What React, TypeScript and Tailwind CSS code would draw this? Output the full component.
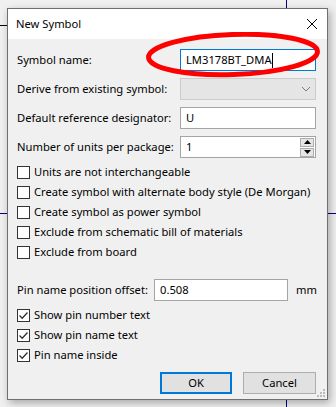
import React from 'react';

const font = { fontFamily: '"Noto Sans", "Open Sans", sans-serif' };

function Check({ checked, label }: { checked?: boolean; label: string }) {
  return (
    <div className="flex items-center h-[20px] whitespace-nowrap">
      <div className="w-[13px] h-[13px] border border-[#333333] bg-white flex items-center justify-center shrink-0">
        {checked && (
          <svg width="11" height="11" viewBox="0 0 11 11">
            <path d="M1.5 5.5 L4.2 8.2 L9.5 2.5" fill="none" stroke="#333333" strokeWidth="1.3" />
          </svg>
        )}
      </div>
      <span className="ml-[4px]">{label}</span>
    </div>
  );
}

function Field({ label, children }: { label: string; children: React.ReactNode }) {
  return (
    <div className="flex items-center h-[22px] whitespace-nowrap">
      <span className="flex-1">{label}</span>
      {children}
    </div>
  );
}

export default function App() {
  return (
    <div className="relative w-[336px] h-[407px] bg-[#f0f0f0] overflow-hidden text-[11.2px] text-black" style={font}>
      {/* drawing canvas lines behind the dialog */}
      <div className="absolute left-0 top-[25px] w-[20px] h-px bg-black" />
      <div className="absolute left-[286px] top-0 w-px h-[407px] bg-[#000080]" />
      <div className="absolute left-0 top-[213px] w-[336px] h-px bg-[#000080]" />

      <div className="relative ml-[7px] mt-[8px] w-[321px] h-[392px] border border-[#6f6f6f] bg-[#f0f0f0] shadow-[2px_3px_8px_rgba(0,0,0,0.3)] flex flex-col">
        <div className="h-[30px] bg-white flex items-center justify-between pl-[8px] pr-[9px]">
          <span>New Symbol</span>
          <svg width="12" height="12" viewBox="0 0 12 12">
            <path d="M1 1 L11 11 M11 1 L1 11" stroke="#000" strokeWidth="1" />
          </svg>
        </div>

        <div className="flex-1 pl-[9px] pr-[11px] pt-[10px] flex flex-col">
          <div className="flex flex-col gap-[7px]">
            <Field label="Symbol name:">
              <div className="w-[136px] h-[22px] border border-[#0078d7] bg-white flex items-center pl-[5px]">
                <span>LM3178BT_DMA</span>
                <span className="w-px h-[15px] bg-black" />
              </div>
            </Field>
            <Field label="Derive from existing symbol:">
              <div className="w-[136px] h-[22px] border border-[#cccccc] bg-[#e5e5e5] flex items-center justify-end pr-[4px]">
                <svg width="10" height="6" viewBox="0 0 10 6">
                  <path d="M1 1 L5 5 L9 1" fill="none" stroke="#7a7a7a" strokeWidth="1" />
                </svg>
              </div>
            </Field>
            <Field label="Default reference designator:">
              <div className="w-[136px] h-[22px] border border-[#a5a5a5] bg-white flex items-center pl-[5px]">U</div>
            </Field>
            <Field label="Number of units per package:">
              <div className="w-[136px] h-[22px] border border-[#a5a5a5] bg-white flex items-center pl-[5px]">
                <span className="flex-1">1</span>
                <div className="flex flex-col gap-px pr-px">
                  <div className="w-[14px] h-[9px] bg-[#e5e5e5] border border-[#adadad] flex items-center justify-center">
                    <svg width="7" height="4" viewBox="0 0 7 4"><path d="M0 4 L3.5 0 L7 4 Z" fill="#000" /></svg>
                  </div>
                  <div className="w-[14px] h-[9px] bg-[#e5e5e5] border border-[#adadad] flex items-center justify-center">
                    <svg width="7" height="4" viewBox="0 0 7 4"><path d="M0 0 L3.5 4 L7 0 Z" fill="#000" /></svg>
                  </div>
                </div>
              </div>
            </Field>
          </div>

          <div className="mt-[4px] flex flex-col">
            <Check label="Units are not interchangeable" />
            <Check label="Create symbol with alternate body style (De Morgan)" />
            <Check label="Create symbol as power symbol" />
            <Check label="Exclude from schematic bill of materials" />
            <Check label="Exclude from board" />
          </div>

          <div className="mt-[17px] flex items-center h-[22px] whitespace-nowrap">
            <span className="flex-1">Pin name position offset:</span>
            <div className="w-[134px] h-[22px] border border-[#a5a5a5] bg-white flex items-center pl-[5px]">0.508</div>
            <span className="ml-[8px] w-[20px]">mm</span>
          </div>

          <div className="mt-[4px] flex flex-col">
            <Check checked label="Show pin number text" />
            <Check checked label="Show pin name text" />
            <Check checked label="Pin name inside" />
          </div>

          <div className="mt-[7px] flex justify-end gap-[11px]">
            <div className="w-[72px] h-[22px] border-2 border-[#0078d7] bg-[#e1e1e1] flex items-center justify-center">OK</div>
            <div className="w-[73px] h-[22px] border border-[#adadad] bg-[#e1e1e1] flex items-center justify-center">Cancel</div>
          </div>
        </div>

        {/* resize grip */}
        <svg className="absolute right-[1px] bottom-[1px]" width="10" height="10" viewBox="0 0 10 10">
          <rect x="7" y="1" width="2" height="2" fill="#bcbcbc" />
          <rect x="4" y="4" width="2" height="2" fill="#bcbcbc" />
          <rect x="7" y="4" width="2" height="2" fill="#bcbcbc" />
          <rect x="1" y="7" width="2" height="2" fill="#bcbcbc" />
          <rect x="4" y="7" width="2" height="2" fill="#bcbcbc" />
          <rect x="7" y="7" width="2" height="2" fill="#bcbcbc" />
        </svg>
      </div>

      {/* red annotation ellipse */}
      <svg className="absolute left-[146px] top-[32px]" width="176" height="46" viewBox="0 0 176 46">
        <ellipse cx="87" cy="22.5" rx="84.5" ry="20" fill="none" stroke="#ff0000" strokeWidth="5" transform="rotate(-2 87 22.5)" />
      </svg>
    </div>
  );
}
